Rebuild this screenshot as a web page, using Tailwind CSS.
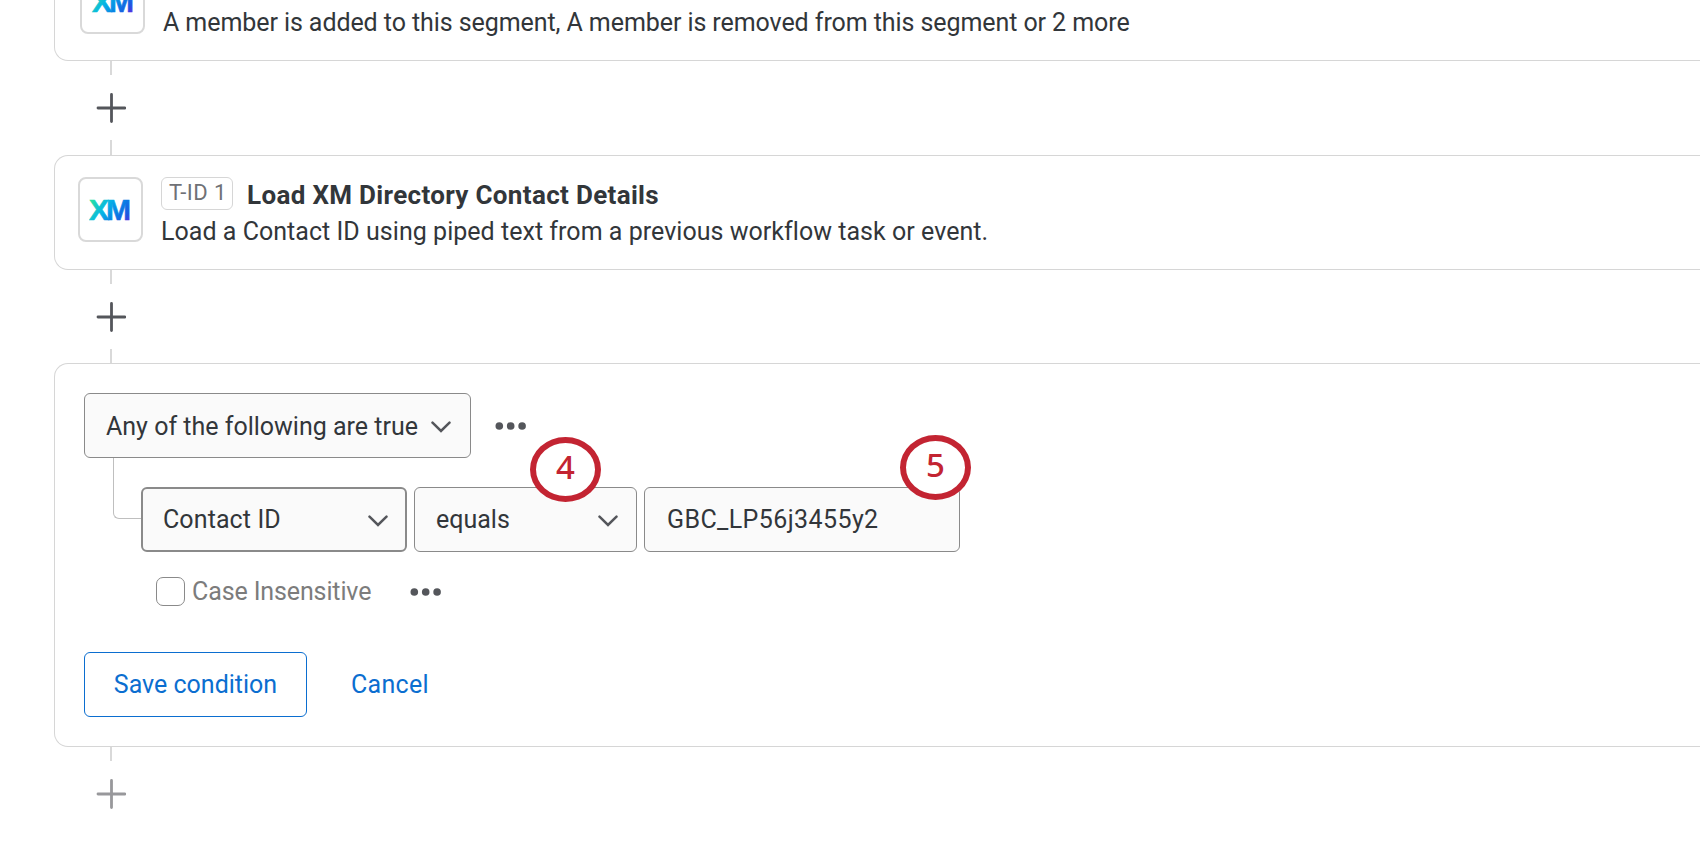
<!DOCTYPE html>
<html lang="en">

<head>
    <meta charset="UTF-8">
    <title>Workflow</title>
    <script src="https://cdn.jsdelivr.net/npm/@tailwindcss/browser@4"></script>
</head>

<body class="bg-white w-[1700px] h-[852px] overflow-hidden font-['Roboto',sans-serif] text-[25px] leading-[30px] text-[#32363a]">
    <svg class="hidden">
        <defs>
            <symbol id="plus" viewBox="0 0 30 30">
                <path d="M15.500 1.500v27M2 15h27" stroke="currentColor" stroke-width="2.800" stroke-linecap="round" />
            </symbol>
            <symbol id="chevron" viewBox="0 0 20 12">
                <path d="M1.500 1.700L10 10l8.500-8.300" fill="none" stroke="currentColor" stroke-width="2.500" stroke-linecap="round" />
            </symbol>
            <symbol id="dots" viewBox="0 0 32 8">
                <g fill="currentColor">
                    <circle cx="4.300" cy="4" r="3.800" />
                    <circle cx="15.700" cy="4" r="3.800" />
                    <circle cx="27.100" cy="4" r="3.800" />
                </g>
            </symbol>
        </defs>
    </svg>

    <!-- XM wordmark gradient, referenced by both tiles -->
    <svg class="absolute w-0 h-0">
        <defs>
            <linearGradient id="xm" gradientUnits="userSpaceOnUse" x1="4" y1="2" x2="40" y2="27">
                <stop offset="0" stop-color="#24dfa6" />
                <stop offset="0.35" stop-color="#06b4e6" />
                <stop offset="0.65" stop-color="#0a7be4" />
                <stop offset="0.85" stop-color="#1f55e0" />
                <stop offset="1" stop-color="#6a1fe0" />
            </linearGradient>
        </defs>
    </svg>

    <main class="pl-[54px] flex flex-col">
        <!-- Event -->
        <section class="h-[61px] border-b border-l border-[#d6d6d6] rounded-bl-[14px] pl-[25px] flex items-end gap-[18px]">
            <div class="w-[65px] h-[65px] shrink-0 mb-[26px] border-2 border-[#d9d9d9] rounded-lg flex items-center justify-center">
                <svg class="w-[43px] h-[26px]"><text x="1" y="23" textLength="42" lengthAdjust="spacing" fill="url(#xm)" stroke="url(#xm)" stroke-width="0.6" class="font-['Liberation_Sans',sans-serif] font-bold text-[30px]">XM</text></svg>
            </div>
            <div class="mb-[22px] whitespace-nowrap">
                <h2 class="mb-[8px] text-[26px] font-bold tracking-[0.35px]">Segment membership</h2>
                <p class="tracking-[-0.075px]">A member is added to this segment, A member is removed from this segment or 2 more</p>
            </div>
        </section>

        <div class="w-[114px] h-[94px] flex flex-col items-center justify-between">
            <div class="w-[2px] h-[14px] bg-[#d9d9d9]"></div>
            <svg class="size-[30px] text-[#54565b]"><use href="#plus" /></svg>
            <div class="w-[2px] h-[15px] bg-[#d9d9d9]"></div>
        </div>

        <!-- Task -->
        <section class="h-[115px] border border-r-0 border-[#d6d6d6] rounded-l-[14px] pl-[23px] pt-[21px] flex gap-[18px]">
            <div class="w-[65px] h-[65px] shrink-0 border-2 border-[#d9d9d9] rounded-lg flex items-center justify-center">
                <svg class="w-[43px] h-[26px]"><text x="0" y="23" textLength="42" lengthAdjust="spacing" fill="url(#xm)" stroke="url(#xm)" stroke-width="0.6" class="font-['Liberation_Sans',sans-serif] font-bold text-[30px]">XM</text></svg>
            </div>
            <div class="whitespace-nowrap">
                <div class="flex">
                    <div class="w-[72px] h-[33px] border border-[#d6d6d6] rounded-md flex items-center justify-center text-[22px] leading-[30px] tracking-[0.5px] pl-[2px] pb-[1px] text-[#6f7176]">T-ID 1</div>
                    <h2 class="ml-[14px] mt-[3px] mb-[1px] text-[26px] font-bold tracking-[0.33px]">Load XM Directory Contact Details</h2>
                </div>
                <p class="mt-[6px] tracking-[0.035px]">Load a Contact ID using piped text from a previous workflow task or event.</p>
            </div>
        </section>

        <div class="w-[114px] h-[93px] flex flex-col items-center justify-between">
            <div class="w-[2px] h-[14px] bg-[#d9d9d9]"></div>
            <svg class="size-[30px] text-[#54565b]"><use href="#plus" /></svg>
            <div class="w-[2px] h-[14px] bg-[#d9d9d9]"></div>
        </div>

        <!-- Condition -->
        <section class="h-[384px] border border-r-0 border-[#d6d6d6] rounded-l-[14px] pl-[29px] pt-[29px]">
            <div class="flex items-center">
                <button class="w-[387px] h-[65px] border border-[#8a8a8a] rounded-md bg-[#fafafa] pl-[21px] pr-[19px] pt-[2px] flex items-center justify-between whitespace-nowrap">
                    Any of the following are true
                    <svg class="w-5 h-3 text-[#54565b]"><use href="#chevron" /></svg>
                </button>
                <svg class="ml-6 w-8 h-2 text-[#54565b]"><use href="#dots" /></svg>
            </div>
            <div class="flex">
                <div class="ml-[29px] w-[28px] h-[61px] border-l border-b border-[#bfbfbf] rounded-bl-md"></div>
                <div class="mt-[29px] flex gap-[7px]">
                    <button class="w-[266px] h-[65px] border-2 border-[#8a8a8a] rounded-md bg-[#fafafa] pl-[20px] pr-[17px] flex items-center justify-between">
                        <span class="tracking-[0.1px]">Contact ID</span>
                        <svg class="mt-[2px] w-5 h-3 text-[#54565b]"><use href="#chevron" /></svg>
                    </button>
                    <div class="relative">
                        <button class="w-[223px] h-[65px] border border-[#8a8a8a] rounded-md bg-[#fafafa] pl-[21px] pr-[18px] flex items-center justify-between">
                            equals
                            <svg class="mt-[2px] w-5 h-3 text-[#54565b]"><use href="#chevron" /></svg>
                        </button>
                        <div class="absolute left-[116px] -top-[50px] w-[71px] h-[65px] rounded-[50%] border-[6px] border-[#c32432] bg-white text-[#c32432] font-['Noto_Sans',sans-serif] font-medium text-[33px] flex items-center justify-center pb-[5px]">4</div>
                    </div>
                    <div class="relative">
                        <div class="w-[316px] h-[65px] border border-[#8a8a8a] rounded-md bg-[#fafafa] pl-[22px] flex items-center tracking-[0.4px]">GBC_LP56j3455y2</div>
                        <div class="absolute left-[256px] -top-[52px] w-[71px] h-[65px] rounded-[50%] border-[6px] border-[#c32432] bg-white text-[#c32432] font-['Noto_Sans',sans-serif] font-medium text-[33px] flex items-center justify-center pb-[5px]">5</div>
                    </div>
                </div>
            </div>
            <div class="ml-[72px] mt-[25px] h-[29px] flex items-center text-[#7c7c7c]">
                <span class="size-[29px] border border-[#8a8a8a] rounded-[7px]"></span>
                <span class="ml-[7px] w-[218px] tracking-[-0.12px]">Case Insensitive</span>
                <svg class="w-8 h-2 text-[#54565b]"><use href="#dots" /></svg>
            </div>
            <div class="mt-[46px] flex items-center text-[#0b6ed0]">
                <button class="w-[223px] h-[65px] border border-[#0b6ed0] rounded-md">Save condition</button>
                <button class="ml-[44px] tracking-[0.3px]">Cancel</button>
            </div>
        </section>

        <div class="w-[114px] h-[62px] flex flex-col items-center justify-between">
            <div class="w-[2px] h-[14px] bg-[#d9d9d9]"></div>
            <svg class="size-[30px] text-[#98989b]"><use href="#plus" /></svg>
        </div>
    </main>
</body>

</html>
